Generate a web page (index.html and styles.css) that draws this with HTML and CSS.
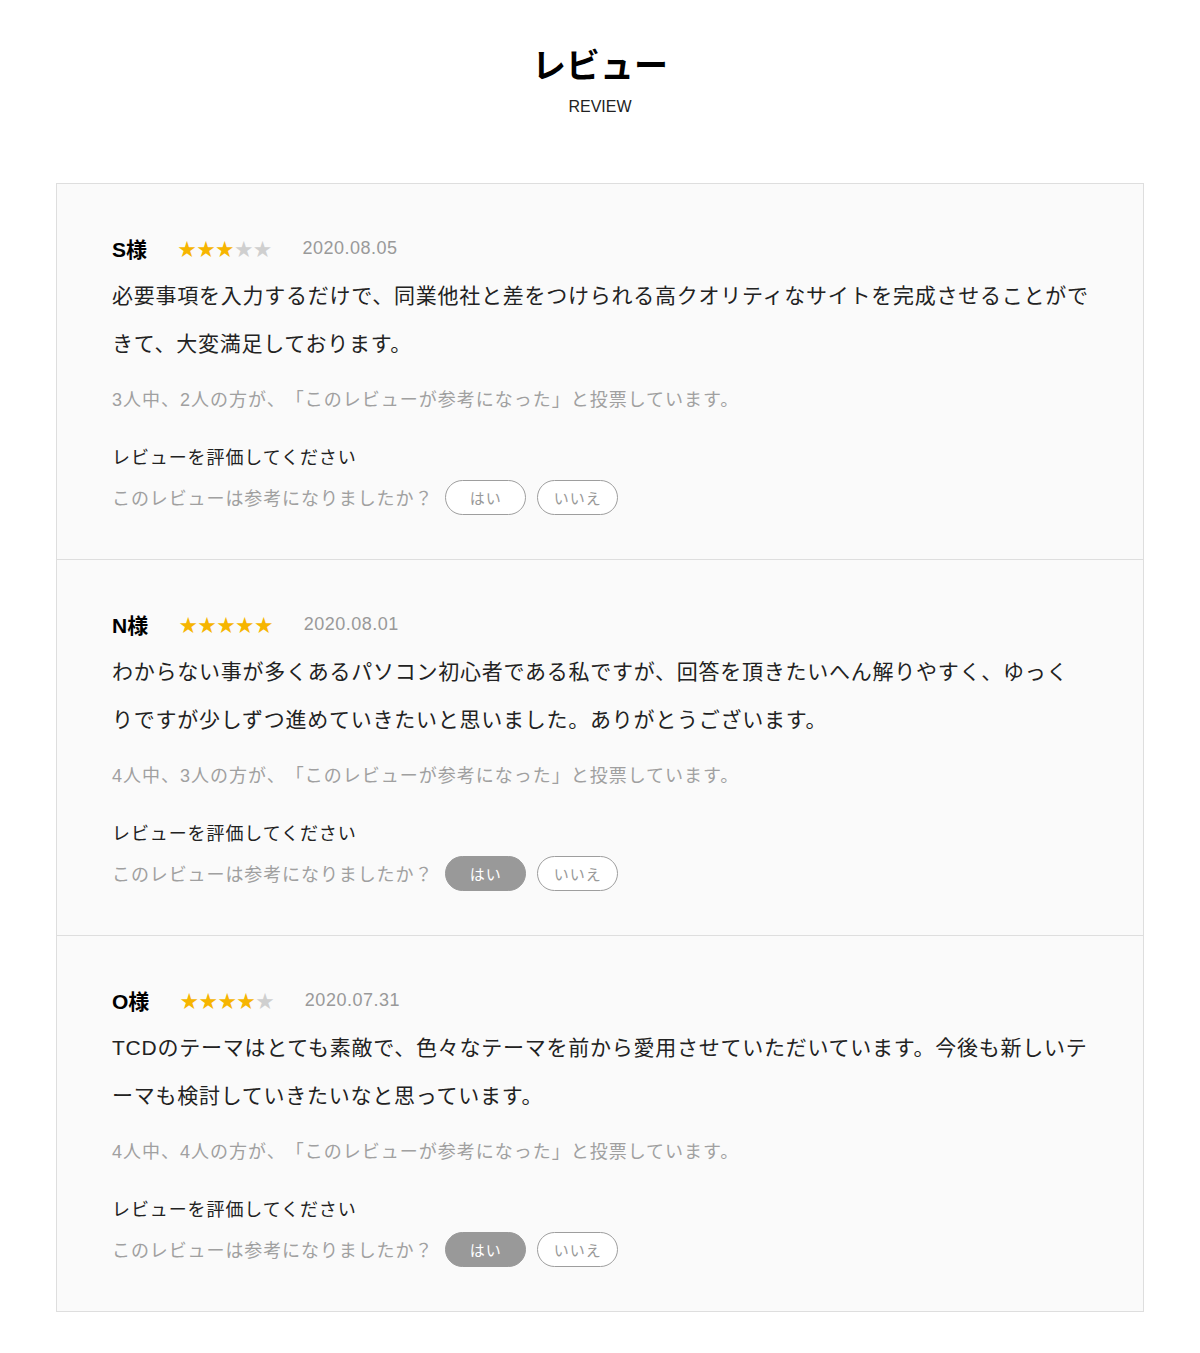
FILE: index.html
```html
<!DOCTYPE html>
<html lang="ja">
<head>
<meta charset="utf-8">
<title>レビュー</title>
<link rel="stylesheet" href="styles.css">
</head>
<body>
<header class="head">
  <h1 class="head-title">レビュー</h1>
  <p class="head-sub">REVIEW</p>
</header>
<section class="reviews">
  <article class="review">
    <div class="review-meta">
      <span class="review-name">S様</span>
      <span class="stars"><span class="on">★★★</span><span class="off">★★</span></span>
      <span class="review-date">2020.08.05</span>
    </div>
    <p class="review-body">必要事項を入力するだけで、同業他社と差をつけられる高クオリティなサイトを完成させることができて、大変満足しております。</p>
    <p class="review-votes">3人中、2人の方が、「このレビューが参考になった」と投票しています。</p>
    <p class="review-ask">レビューを評価してください</p>
    <div class="review-q">
      <span class="review-q-text">このレビューは参考になりましたか？</span>
      <button class="vote-btn" type="button">はい</button>
      <button class="vote-btn" type="button">いいえ</button>
    </div>
  </article>
  <article class="review">
    <div class="review-meta">
      <span class="review-name">N様</span>
      <span class="stars"><span class="on">★★★★★</span></span>
      <span class="review-date">2020.08.01</span>
    </div>
    <p class="review-body">わからない事が多くあるパソコン初心者である私ですが、回答を頂きたいへん解りやすく、ゆっく<br>りですが少しずつ進めていきたいと思いました。ありがとうございます。</p>
    <p class="review-votes">4人中、3人の方が、「このレビューが参考になった」と投票しています。</p>
    <p class="review-ask">レビューを評価してください</p>
    <div class="review-q">
      <span class="review-q-text">このレビューは参考になりましたか？</span>
      <button class="vote-btn is-active" type="button">はい</button>
      <button class="vote-btn" type="button">いいえ</button>
    </div>
  </article>
  <article class="review">
    <div class="review-meta">
      <span class="review-name">O様</span>
      <span class="stars"><span class="on">★★★★</span><span class="off">★</span></span>
      <span class="review-date">2020.07.31</span>
    </div>
    <p class="review-body">TCDのテーマはとても素敵で、色々なテーマを前から愛用させていただいています。今後も新しいテ<br>ーマも検討していきたいなと思っています。</p>
    <p class="review-votes">4人中、4人の方が、「このレビューが参考になった」と投票しています。</p>
    <p class="review-ask">レビューを評価してください</p>
    <div class="review-q">
      <span class="review-q-text">このレビューは参考になりましたか？</span>
      <button class="vote-btn is-active" type="button">はい</button>
      <button class="vote-btn" type="button">いいえ</button>
    </div>
  </article>
</section>
</body>
</html>
```

FILE: styles.css
```css
* { box-sizing: border-box; }

html, body {
  margin: 0;
  padding: 0;
  background: #fff;
}

body {
  font-family: "Liberation Sans", "Noto Sans CJK JP", sans-serif;
  color: #222;
  text-spacing-trim: space-all;
}

.head {
  padding-top: 45px;
  text-align: center;
}

.head-title {
  margin: 0;
  font-size: 34px;
  line-height: 42px;
  font-weight: 700;
  color: #000;
}

.head-sub {
  margin: 10px 0 0;
  font-size: 16px;
  line-height: 20px;
  color: #222;
}

.reviews {
  margin: 66px 56px 0;
  border: 1px solid #dedede;
  background: #fafafa;
}

.review {
  padding: 40px 47px 44px 55px;
}

.review + .review {
  border-top: 1px solid #dedede;
}

.review-meta {
  display: flex;
  align-items: center;
  height: 48px;
}

.review-name {
  font-size: 21px;
  font-weight: 700;
  color: #000;
  margin-right: 31px;
}

.stars {
  font-family: "Noto Sans CJK JP", sans-serif;
  font-size: 18px;
  letter-spacing: 0.9px;
  margin-right: 30px;
  line-height: 1;
}

.stars .on { color: #f6b500; }
.stars .off { color: #cfcfcf; }

.review-date {
  font-size: 18px;
  letter-spacing: 0.5px;
  color: #999;
}

.review-body {
  margin: 0;
  font-size: 21px;
  letter-spacing: 0.75px;
  line-height: 48px;
  color: #222;
}

.review-votes {
  margin: 17px 0 0;
  font-size: 18px;
  letter-spacing: 1px;
  line-height: 30px;
  color: #a0a0a0;
}

.review-ask {
  margin: 28px 0 0;
  font-size: 18px;
  letter-spacing: 0.9px;
  line-height: 30px;
  color: #222;
}

.review-q {
  margin-top: 7px;
  display: flex;
  align-items: center;
  height: 35px;
}

.review-q-text {
  font-size: 18px;
  letter-spacing: 0.9px;
  color: #a0a0a0;
  margin-right: 12px;
  padding-bottom: 2px;
}

.vote-btn {
  width: 81px;
  height: 35px;
  margin: 0 11px 0 0;
  padding: 0 0 1px;
  border: 1px solid #9e9e9e;
  border-radius: 18px;
  background: #fff;
  font-family: "Liberation Sans", "Noto Sans CJK JP", sans-serif;
  font-size: 15px;
  letter-spacing: 1px;
  color: #999;
  cursor: pointer;
}

.vote-btn.is-active {
  background: #999;
  border-color: #999;
  color: #fff;
}
```
